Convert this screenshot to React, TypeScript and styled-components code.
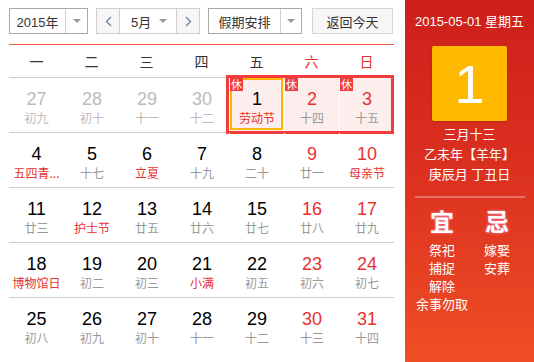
import styled, { createGlobalStyle } from 'styled-components';

const GlobalStyle = createGlobalStyle`
  html, body {
    margin: 0;
    padding: 0;
    background: #fff;
    font-family: "Liberation Sans", "Noto Sans CJK SC", sans-serif;
  }
`;

type Day = {
  num: number;
  sub: string;
  other?: boolean;
  weekend?: boolean;
  fest?: boolean;
  holiday?: boolean;
  selected?: boolean;
};

const weekdays = ['一', '二', '三', '四', '五', '六', '日'];

const weeks: Day[][] = [
  [
    { num: 27, sub: '初九', other: true },
    { num: 28, sub: '初十', other: true },
    { num: 29, sub: '十一', other: true },
    { num: 30, sub: '十二', other: true },
    { num: 1, sub: '劳动节', fest: true, holiday: true, selected: true },
    { num: 2, sub: '十四', weekend: true, holiday: true },
    { num: 3, sub: '十五', weekend: true, holiday: true },
  ],
  [
    { num: 4, sub: '五四青...', fest: true },
    { num: 5, sub: '十七' },
    { num: 6, sub: '立夏', fest: true },
    { num: 7, sub: '十九' },
    { num: 8, sub: '二十' },
    { num: 9, sub: '廿一', weekend: true },
    { num: 10, sub: '母亲节', weekend: true, fest: true },
  ],
  [
    { num: 11, sub: '廿三' },
    { num: 12, sub: '护士节', fest: true },
    { num: 13, sub: '廿五' },
    { num: 14, sub: '廿六' },
    { num: 15, sub: '廿七' },
    { num: 16, sub: '廿八', weekend: true },
    { num: 17, sub: '廿九', weekend: true },
  ],
  [
    { num: 18, sub: '博物馆日', fest: true },
    { num: 19, sub: '初二' },
    { num: 20, sub: '初三' },
    { num: 21, sub: '小满', fest: true },
    { num: 22, sub: '初五' },
    { num: 23, sub: '初六', weekend: true },
    { num: 24, sub: '初七', weekend: true },
  ],
  [
    { num: 25, sub: '初八' },
    { num: 26, sub: '初九' },
    { num: 27, sub: '初十' },
    { num: 28, sub: '十一' },
    { num: 29, sub: '十二' },
    { num: 30, sub: '十三', weekend: true },
    { num: 31, sub: '十四', weekend: true },
  ],
];

const RED = '#e8312f';

export default function App() {
  return (
    <>
      <GlobalStyle />
      <Page>
        <Main>
          <Toolbar>
            <Select $width={79} $border="#a9a9a9">
              <SelectValue $width={55}>2015年</SelectValue>
              <SelectArrow>
                <Caret />
              </SelectArrow>
            </Select>

            <Select $width={104} $border="#cfcfcf">
              <NavButton>
                <Chevron dir="left" />
              </NavButton>
              <MonthValue>
                <span>5月</span>
                <Caret />
              </MonthValue>
              <NavButton>
                <Chevron dir="right" />
              </NavButton>
            </Select>

            <Select $width={94} $border="#a9a9a9">
              <SelectValue $width={71}>假期安排</SelectValue>
              <SelectArrow>
                <Caret />
              </SelectArrow>
            </Select>

            <TodayButton>返回今天</TodayButton>
          </Toolbar>

          <RedLine />

          <WeekHeader>
            {weekdays.map((w, i) => (
              <WeekdayLabel key={w} $red={i >= 5}>
                {w}
              </WeekdayLabel>
            ))}
          </WeekHeader>

          {weeks.map((week, wi) => (
            <WeekRow key={wi} $last={wi === weeks.length - 1}>
              {week.map((d, di) => (
                <Cell key={di} $holiday={d.holiday}>
                  {d.holiday && <RestBadge>休</RestBadge>}
                  {d.selected && <SelectedFrame />}
                  <DayNum $other={d.other} $red={d.weekend}>
                    {d.num}
                  </DayNum>
                  <Lunar $other={d.other} $red={d.fest}>
                    {d.sub}
                  </Lunar>
                </Cell>
              ))}
              {week.some((d) => d.holiday) && <HolidayFrame />}
            </WeekRow>
          ))}
        </Main>

        <Side>
          <SideDate>2015-05-01 星期五</SideDate>
          <BigDay>1</BigDay>
          <SideLine>三月十三</SideLine>
          <SideLine>乙未年【羊年】</SideLine>
          <SideLine>庚辰月 丁丑日</SideLine>
          <SideDivider />
          <Almanac>
            <AlmanacCol>
              <AlmanacHead>宜</AlmanacHead>
              <AlmanacItem>祭祀</AlmanacItem>
              <AlmanacItem>捕捉</AlmanacItem>
              <AlmanacItem>解除</AlmanacItem>
              <AlmanacItem>余事勿取</AlmanacItem>
            </AlmanacCol>
            <AlmanacCol>
              <AlmanacHead>忌</AlmanacHead>
              <AlmanacItem>嫁娶</AlmanacItem>
              <AlmanacItem>安葬</AlmanacItem>
            </AlmanacCol>
          </Almanac>
        </Side>
      </Page>
    </>
  );
}

function Chevron({ dir }: { dir: 'left' | 'right' }) {
  return (
    <svg width="7" height="11" viewBox="0 0 7 11">
      <path
        d={dir === 'left' ? 'M6 1 L1.5 5.5 L6 10' : 'M1 1 L5.5 5.5 L1 10'}
        fill="none"
        stroke="#6f7fa8"
        strokeWidth="1.3"
      />
    </svg>
  );
}

const Page = styled.div`
  display: flex;
  width: 534px;
  height: 362px;
  overflow: hidden;
`;

const Main = styled.div`
  width: 385px;
  padding: 8px 11px 0 9px;
  display: flex;
  flex-direction: column;
`;

const Toolbar = styled.div`
  display: flex;
  gap: 8px;
  height: 26px;
`;

const Select = styled.div<{ $width: number; $border: string }>`
  width: ${(p) => p.$width}px;
  height: 26px;
  box-sizing: border-box;
  border: 1px solid ${(p) => p.$border};
  display: flex;
  background: #fff;
  color: #333;
  font-size: 13px;
`;

const SelectValue = styled.div<{ $width: number }>`
  width: ${(p) => p.$width}px;
  display: flex;
  align-items: center;
  justify-content: center;
  border-right: 1px solid #cfcfcf;
`;

const SelectArrow = styled.div`
  flex: 1;
  display: flex;
  align-items: center;
  justify-content: center;
`;

const Caret = styled.span`
  width: 0;
  height: 0;
  border-left: 4px solid transparent;
  border-right: 4px solid transparent;
  border-top: 4px solid #999;
`;

const NavButton = styled.div`
  width: 22px;
  display: flex;
  align-items: center;
  justify-content: center;
  background: #f7f7f7;
`;

const MonthValue = styled.div`
  flex: 1;
  display: flex;
  align-items: center;
  justify-content: space-between;
  padding: 0 9px 0 11px;
  border-left: 1px solid #cfcfcf;
  border-right: 1px solid #cfcfcf;
`;

const TodayButton = styled.div`
  margin-left: auto;
  width: 81px;
  height: 26px;
  box-sizing: border-box;
  border: 1px solid #d6d6d6;
  background: #f7f7f7;
  color: #333;
  font-size: 13px;
  display: flex;
  align-items: center;
  justify-content: center;
  margin-right: 1px;
`;

const RedLine = styled.div`
  margin-top: 10px;
  height: 1px;
  background: #f05545;
`;

const WeekHeader = styled.div`
  display: grid;
  grid-template-columns: repeat(7, 55px);
  height: 32px;
  border-bottom: 1px solid #cccccc;
`;

const WeekdayLabel = styled.div<{ $red?: boolean }>`
  display: flex;
  align-items: center;
  justify-content: center;
  font-size: 14px;
  color: ${(p) => (p.$red ? RED : '#333')};
`;

const WeekRow = styled.div<{ $last?: boolean }>`
  position: relative;
  display: grid;
  grid-template-columns: repeat(7, 55px);
  height: 54px;
  border-bottom: 1px solid ${(p) => (p.$last ? 'transparent' : '#cccccc')};
`;

const Cell = styled.div<{ $holiday?: boolean }>`
  position: relative;
  display: flex;
  flex-direction: column;
  align-items: center;
  padding-top: 10px;
  background: ${(p) => (p.$holiday ? '#fdeeee' : 'transparent')};
  & + & {
    border-left: ${(p) => (p.$holiday ? '1px solid #fff' : 'none')};
  }
`;

const DayNum = styled.div<{ $other?: boolean; $red?: boolean }>`
  font-family: "Liberation Sans", Arial, sans-serif;
  font-size: 18px;
  line-height: 22px;
  color: ${(p) => (p.$other ? '#bbbbbb' : p.$red ? RED : '#000')};
`;

const Lunar = styled.div<{ $other?: boolean; $red?: boolean }>`
  font-family: "Noto Sans CJK SC", sans-serif;
  font-size: 12px;
  line-height: 16px;
  white-space: nowrap;
  color: ${(p) => (p.$red ? RED : p.$other ? '#bbbbbb' : '#999')};
`;

const RestBadge = styled.span`
  position: absolute;
  top: 0;
  left: 0;
  width: 13px;
  height: 13px;
  background: #f23b3b;
  color: #fff;
  font-family: "Noto Sans CJK SC", sans-serif;
  font-size: 11px;
  line-height: 13px;
  text-align: center;
  z-index: 2;
`;

const SelectedFrame = styled.span`
  position: absolute;
  inset: 0 1px 2px 0;
  border: 2px solid #ffb400;
  pointer-events: none;
`;

const HolidayFrame = styled.div`
  position: absolute;
  top: -3px;
  left: ${4 * 55 - 3}px;
  width: ${3 * 55 + 3}px;
  height: 59px;
  box-sizing: border-box;
  border: 3px solid #f23b3b;
  pointer-events: none;
`;

const Side = styled.div`
  width: 129px;
  height: 362px;
  background: linear-gradient(180deg, #cd1f1b 0%, #dc3220 50%, #f04e25 100%);
  color: #fff;
  display: flex;
  flex-direction: column;
  align-items: center;
  padding-top: 12px;
  box-sizing: border-box;
`;

const SideDate = styled.div`
  font-size: 13px;
  line-height: 20px;
  white-space: nowrap;
`;

const BigDay = styled.div`
  margin-top: 14px;
  width: 75px;
  height: 75px;
  border-radius: 2px;
  background: #ffb900;
  box-shadow: 0 1px 2px rgba(120, 30, 0, 0.35);
  display: flex;
  align-items: center;
  justify-content: center;
  font-family: "Liberation Sans", Arial, sans-serif;
  font-size: 54px;
  color: #fff;
  margin-bottom: 4px;
`;

const SideLine = styled.div`
  font-size: 13px;
  line-height: 20px;
  white-space: nowrap;
`;

const SideDivider = styled.div`
  margin-top: 11px;
  width: 110px;
  height: 2px;
  background: rgba(255, 255, 255, 0.3);
`;

const Almanac = styled.div`
  margin-top: 11px;
  display: grid;
  grid-template-columns: 55px 55px;
`;

const AlmanacCol = styled.div`
  display: flex;
  flex-direction: column;
  align-items: center;
`;

const AlmanacHead = styled.div`
  font-size: 24px;
  line-height: 28px;
  font-weight: bold;
  text-shadow: 0 0 3px rgba(255, 150, 200, 0.9);
  margin-bottom: 5px;
`;

const AlmanacItem = styled.div`
  font-size: 13px;
  line-height: 18px;
  white-space: nowrap;
`;
